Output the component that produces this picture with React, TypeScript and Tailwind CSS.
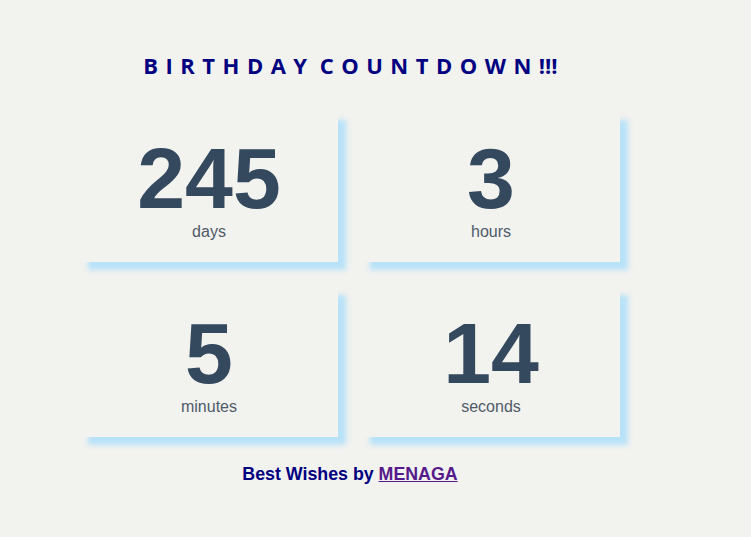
export default function App() {
  const items = [
    { value: "245", label: "days" },
    { value: "3", label: "hours" },
    { value: "5", label: "minutes" },
    { value: "14", label: "seconds" },
  ];

  return (
    <div className="min-h-[537px] w-full bg-[#f2f2ef]">
      <div className="flex w-[700px] flex-col items-center pt-[49px]">
        <h1 className="pl-[1px] font-['Open_Sans',sans-serif] text-[22px] font-bold leading-[32px] text-[#000080]">
          <span className="tracking-[0.34em] [word-spacing:-8px]">BIRTHDAY COUNTDOWN</span>
          <span>!!!</span>
        </h1>

        <div className="mt-[31px] grid grid-cols-[258px_258px] gap-x-[24px] gap-y-[25px]">
          {items.map((item) => (
            <div
              key={item.label}
              className="flex h-[150px] flex-col items-center shadow-[8px_8px_5px_#b8e2f8]"
            >
              <div className="pt-[30px] font-['Liberation_Sans',Arial,sans-serif] text-[86px] font-bold leading-[72px] text-[#34495e]">
                {item.value}
              </div>
              <div className="mt-[6px] font-['Liberation_Sans',Arial,sans-serif] text-[16px] text-[#4f5b69]">
                {item.label}
              </div>
            </div>
          ))}
        </div>

        <p className="mt-[24px] font-['Liberation_Sans',Arial,sans-serif] text-[17.8px] font-bold text-[#000080]">
          Best Wishes by{" "}
          <a href="#" className="text-[#551a8b] underline">
            MENAGA
          </a>
        </p>
      </div>
    </div>
  );
}
